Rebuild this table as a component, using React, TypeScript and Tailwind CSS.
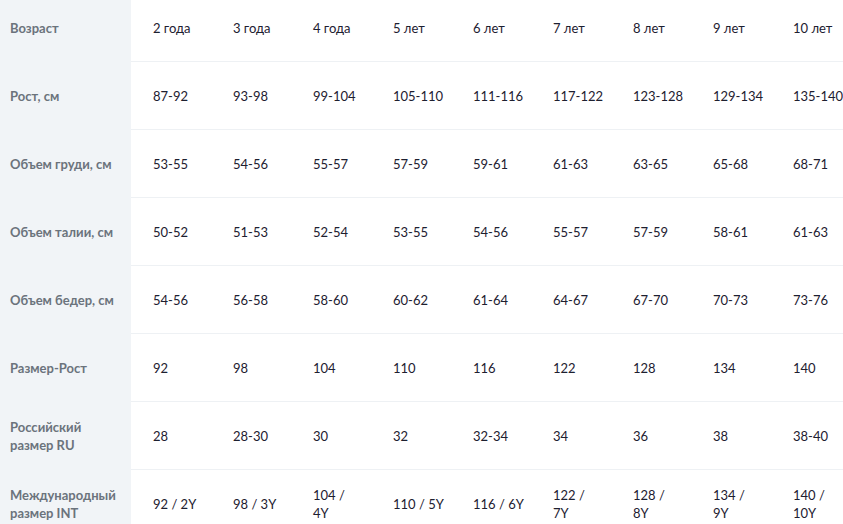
const rows: { label: string; values: string[] }[] = [
  { label: 'Возраст', values: ['2 года', '3 года', '4 года', '5 лет', '6 лет', '7 лет', '8 лет', '9 лет', '10 лет'] },
  { label: 'Рост, см', values: ['87-92', '93-98', '99-104', '105-110', '111-116', '117-122', '123-128', '129-134', '135-140'] },
  { label: 'Объем груди, см', values: ['53-55', '54-56', '55-57', '57-59', '59-61', '61-63', '63-65', '65-68', '68-71'] },
  { label: 'Объем талии, см', values: ['50-52', '51-53', '52-54', '53-55', '54-56', '55-57', '57-59', '58-61', '61-63'] },
  { label: 'Объем бедер, см', values: ['54-56', '56-58', '58-60', '60-62', '61-64', '64-67', '67-70', '70-73', '73-76'] },
  { label: 'Размер-Рост', values: ['92', '98', '104', '110', '116', '122', '128', '134', '140'] },
  { label: 'Российский размер RU', values: ['28', '28-30', '30', '32', '32-34', '34', '36', '38', '38-40'] },
  {
    label: 'Международный\nразмер INT',
    values: ['92 / 2Y', '98 / 3Y', '104 /\n4Y', '110 / 5Y', '116 / 6Y', '122 /\n7Y', '128 /\n8Y', '134 /\n9Y', '140 /\n10Y'],
  },
];

const App = () => {
  return (
    <div className="w-[843px] h-[524px] overflow-hidden bg-white" style={{ fontFamily: 'Lato, "Open Sans", sans-serif' }}>
      <div className="-mt-[6px] flex flex-col w-[851px]">
        {rows.map((row, i) => (
          <div key={row.label} className="flex h-[68px]">
            <div className="w-[131px] shrink-0 bg-[#f1f4f7] flex items-center pl-[10px] pr-2">
              <p className="text-[13px] leading-[18px] font-bold text-[#6b737c] whitespace-pre-line">{row.label}</p>
            </div>
            <div className={`flex flex-1 ${i < rows.length - 1 ? 'border-b border-[#eef1f4]' : ''}`}>
              {row.values.map((v) => (
                <div key={v} className="w-[80px] shrink-0 flex items-center pl-[22px]">
                  <p className="text-[13px] leading-[18px] text-[#1d2030] whitespace-pre-line">{v}</p>
                </div>
              ))}
            </div>
          </div>
        ))}
      </div>
    </div>
  );
};

export default App;
